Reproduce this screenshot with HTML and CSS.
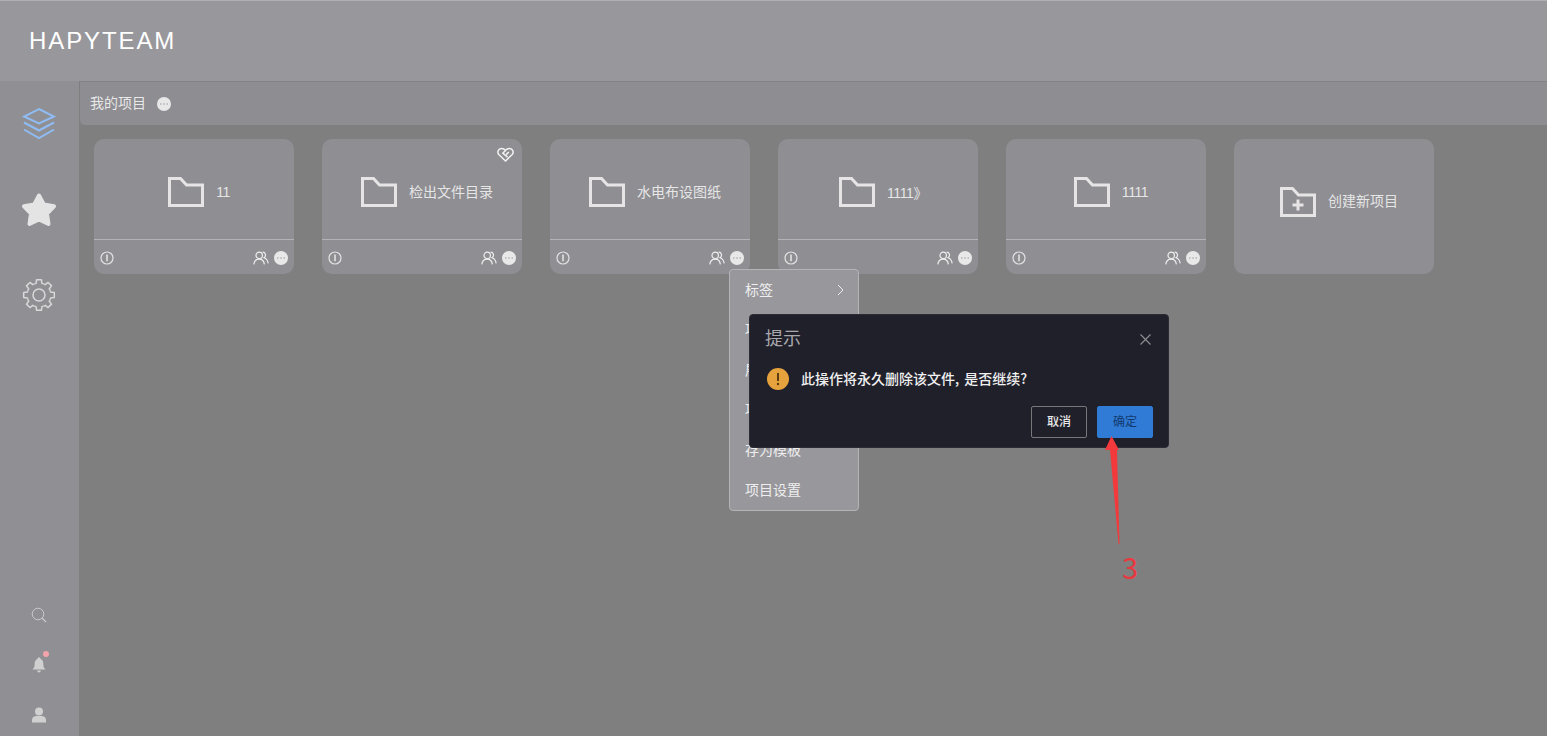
FILE: index.html
```html
<!DOCTYPE html>
<html lang="zh-CN">
<head>
<meta charset="utf-8">
<title>HAPYTEAM</title>
<link rel="stylesheet" href="styles.css">
</head>
<body>
<svg class="defs" width="0" height="0" aria-hidden="true">
  <symbol id="folder" viewBox="0 0 36 30"><path d="M1.5 1.5H12.5L18.5 8H34.5V28.5H1.5Z" fill="none" stroke="currentColor" stroke-width="3"/></symbol>
  <symbol id="info" viewBox="0 0 14 14"><circle cx="7" cy="7" r="6" fill="none" stroke="currentColor" stroke-width="1.2"/><path d="M7 3.6V10.2" stroke="currentColor" stroke-width="1.6"/></symbol>
  <symbol id="people" viewBox="0 0 16 14"><circle cx="6.2" cy="4.4" r="3.2" fill="none" stroke="currentColor" stroke-width="1.2"/><path d="M.8 13.4C1.2 10 3.2 8.2 6.2 8.2S11 10 11.4 13.4M9.6 1.2C12.4 1 13.6 4.8 11 6.8C13.4 7.6 14.8 9.6 15.2 12.4" fill="none" stroke="currentColor" stroke-width="1.2"/></symbol>
  <symbol id="more" viewBox="0 0 14 14"><circle cx="7" cy="7" r="7" fill="currentColor"/><circle cx="3.8" cy="7" r=".7" fill="#9a999e"/><circle cx="7" cy="7" r=".7" fill="#9a999e"/><circle cx="10.2" cy="7" r=".7" fill="#9a999e"/></symbol>
  <path id="gear-seg" d="M-4.59 -11.09A12 12 0 0 1 -2.9 -11.64L-2.42 -15.31H2.42L2.9 -11.64A12 12 0 0 1 4.59 -11.09"/>
</svg>

<header class="topbar"><span class="brand">HAPYTEAM</span></header>

<div class="shell">
  <nav class="sidebar">
    <div class="nav-main">
      <svg class="nav-layers" width="34" height="34" viewBox="0 0 34 34"><path d="M17 2L32 9.500L17 16.500L2 9.500Z M2 15.500L17 23.500L32 15.500 M2 22.500L17 31L32 22.500" fill="none" stroke="currentColor" stroke-width="2"/></svg>
      <svg class="nav-star" width="36" height="36" viewBox="0 0 36 36"><path d="M18 3.500L22.800 12.400L33 14.300L26 21.600L27.500 32L18 27.500L8.500 32L10 21.600L3 14.300L13.200 12.400Z" fill="currentColor" stroke="currentColor" stroke-width="4" stroke-linejoin="round"/></svg>
      <svg class="nav-gear" width="34" height="34" viewBox="0 0 34 34">
        <g transform="translate(17 17)" fill="none" stroke="currentColor" stroke-width="1.500" stroke-linejoin="round">
          <use href="#gear-seg"/>
          <use href="#gear-seg" transform="rotate(45)"/>
          <use href="#gear-seg" transform="rotate(90)"/>
          <use href="#gear-seg" transform="rotate(135)"/>
          <use href="#gear-seg" transform="rotate(180)"/>
          <use href="#gear-seg" transform="rotate(225)"/>
          <use href="#gear-seg" transform="rotate(270)"/>
          <use href="#gear-seg" transform="rotate(315)"/>
          <circle r="6"/>
        </g>
      </svg>
    </div>
    <div class="nav-tools">
      <svg class="tool-search" width="16" height="16" viewBox="0 0 16 16"><circle cx="7" cy="7" r="5.800" fill="none" stroke="currentColor" stroke-width="1"/><path d="M11 11L15 15" stroke="currentColor" stroke-width="1.200"/></svg>
      <span class="bell-wrap">
        <svg class="tool-bell" width="14" height="16" viewBox="0 0 14 16"><path d="M7 .5C8 .5 8.600 1.200 8.600 2C11 3 11.400 5.200 11.400 8C11.400 10 12 11 13.600 12.600H.4C2 11 2.600 10 2.600 8C2.600 5.200 3 3 5.400 2C5.400 1.200 6 .5 7 .5ZM5.200 13.600H8.800C8.800 14.800 8 15.500 7 15.500S5.200 14.800 5.200 13.600Z" fill="currentColor"/></svg>
        <span class="bell-dot"></span>
      </span>
      <svg class="tool-user" width="16" height="16" viewBox="0 0 16 16"><circle cx="8" cy="4.400" r="4" fill="currentColor"/><path d="M1 15.500V13C1 10.400 3 9 5.400 9H10.600C13 9 15 10.400 15 13V15.500Z" fill="currentColor"/></svg>
    </div>
  </nav>

  <main class="content">
    <div class="crumb">
      <span class="crumb-text">我的项目</span>
      <svg class="crumb-more" width="14" height="14"><use href="#more"/></svg>
    </div>
    <div class="grid">
      <article class="card">
        <div class="card-body"><svg class="folder" width="36" height="30"><use href="#folder"/></svg><span class="name num">11</span></div>
        <div class="card-foot"><svg class="ic-info" width="14" height="14"><use href="#info"/></svg><svg class="ic-people" width="16" height="14"><use href="#people"/></svg><svg class="ic-more" width="14" height="14"><use href="#more"/></svg></div>
      </article>
      <article class="card">
        <svg class="heart" width="17" height="15" viewBox="0 0 17 15"><path d="M8.500 14L1.800 7.500C0 5.400 1 1.600 4.400 1.400C6 1.300 7.400 2 8.500 3.400C9.600 2 11 1.300 12.600 1.400C16 1.600 17 5.400 15.200 7.500Z" fill="none" stroke="currentColor" stroke-width="1.500"/><path d="M8.500 3.400L5.800 6.200L10.600 10.200M11.800 5L9.200 7.600" fill="none" stroke="currentColor" stroke-width="1.500"/></svg>
        <div class="card-body"><svg class="folder" width="36" height="30"><use href="#folder"/></svg><span class="name">检出文件目录</span></div>
        <div class="card-foot"><svg class="ic-info" width="14" height="14"><use href="#info"/></svg><svg class="ic-people" width="16" height="14"><use href="#people"/></svg><svg class="ic-more" width="14" height="14"><use href="#more"/></svg></div>
      </article>
      <article class="card">
        <div class="card-body"><svg class="folder" width="36" height="30"><use href="#folder"/></svg><span class="name">水电布设图纸</span></div>
        <div class="card-foot"><svg class="ic-info" width="14" height="14"><use href="#info"/></svg><svg class="ic-people" width="16" height="14"><use href="#people"/></svg><svg class="ic-more" width="14" height="14"><use href="#more"/></svg></div>
      </article>
      <article class="card">
        <div class="card-body"><svg class="folder" width="36" height="30"><use href="#folder"/></svg><span class="name num">1111》</span></div>
        <div class="card-foot"><svg class="ic-info" width="14" height="14"><use href="#info"/></svg><svg class="ic-people" width="16" height="14"><use href="#people"/></svg><svg class="ic-more" width="14" height="14"><use href="#more"/></svg></div>
      </article>
      <article class="card">
        <div class="card-body"><svg class="folder" width="36" height="30"><use href="#folder"/></svg><span class="name num">1111</span></div>
        <div class="card-foot"><svg class="ic-info" width="14" height="14"><use href="#info"/></svg><svg class="ic-people" width="16" height="14"><use href="#people"/></svg><svg class="ic-more" width="14" height="14"><use href="#more"/></svg></div>
      </article>
      <article class="card card-new">
        <svg class="folder" width="36" height="30" viewBox="0 0 36 30"><path d="M1.500 1.500H12.500L18.500 8H34.500V28.500H1.500Z" fill="none" stroke="currentColor" stroke-width="3"/><path d="M18 12.500V23.500M12.500 18H23.500" stroke="currentColor" stroke-width="3"/></svg>
        <span>创建新项目</span>
      </article>
    </div>
  </main>
</div>

<ul class="menu">
  <li><span>标签</span><svg width="7" height="12" viewBox="0 0 7 12"><path d="M1 1L6 6L1 11" fill="none" stroke="currentColor" stroke-width="1"/></svg></li>
  <li><span>项目重命名</span></li>
  <li><span>展示成员</span></li>
  <li><span>项目归档</span></li>
  <li><span>存为模板</span></li>
  <li><span>项目设置</span></li>
</ul>

<section class="dialog">
  <div class="dialog-head">
    <h2>提示</h2>
    <svg class="dialog-close" width="11" height="11" viewBox="0 0 11 11"><path d="M.5 .5L10.500 10.500M10.500 .5L.5 10.500" stroke="currentColor" stroke-width="1.100"/></svg>
  </div>
  <div class="dialog-msg">
    <svg width="22" height="22" viewBox="0 0 22 22"><circle cx="11" cy="11" r="11" fill="#e6a23c"/><path d="M11 5V13" stroke="#5b3d10" stroke-width="2"/><circle cx="11" cy="16" r="1.200" fill="#5b3d10"/></svg>
    <p>此操作将永久删除该文件, 是否继续?</p>
  </div>
  <div class="dialog-foot">
    <button class="btn">取消</button>
    <button class="btn btn-primary">确定</button>
  </div>
</section>

<svg class="arrow" width="24" height="112" viewBox="0 0 24 112"><path d="M7.500 1L15 15L13 15L15.500 109L14.500 109L6 15L1 15Z" fill="#f23a3c"/></svg>
<span class="step">3</span>
</body>
</html>
```

FILE: styles.css
```css
* { box-sizing: border-box; }
html, body { margin: 0; height: 100%; }
body {
  width: 1547px;
  height: 736px;
  overflow: hidden;
  position: relative;
  display: flex;
  flex-direction: column;
  background: #7f7f7f;
  color: #e6e6e6;
  font-family: "Noto Sans CJK SC", "Liberation Sans", sans-serif;
  font-size: 14px;
}
.defs { position: absolute; }

.topbar {
  height: 81px;
  flex: none;
  display: flex;
  align-items: center;
  padding-left: 29px;
  background: #98979c;
  border-top: 1px solid #b0afb3;
}
.brand {
  font-family: "Liberation Sans", sans-serif;
  font-size: 24px;
  letter-spacing: 1.9px;
  color: #fff;
}

.shell { flex: 1; display: flex; min-height: 0; }

.sidebar {
  width: 79px;
  flex: none;
  background: #908f94;
  display: flex;
  flex-direction: column;
  justify-content: space-between;
  align-items: center;
  padding: 26px 1px 13px 0;
}
.nav-main { display: flex; flex-direction: column; align-items: center; gap: 51px; }
.nav-layers { color: #8fbcf2; }
.nav-star { color: #e4e4e4; }
.nav-gear { color: #d8d8d8; margin-top: -1px; }
.nav-tools { display: flex; flex-direction: column; align-items: center; gap: 34px; color: #d0d0d0; }
.tool-search { color: #c8c8c8; }
.bell-wrap { position: relative; display: block; width: 14px; height: 16px; }
.tool-bell, .tool-user, .tool-search { display: block; }
.bell-dot {
  position: absolute;
  top: -6px;
  right: -3px;
  width: 6px;
  height: 6px;
  border-radius: 50%;
  background: #f4a3ab;
}

.content { flex: 1; min-width: 0; padding-left: 1px; }
.crumb {
  height: 44px;
  display: flex;
  align-items: center;
  gap: 11px;
  padding-left: 10px;
  background: #8e8d92;
  border-top: 1px solid #828186;
  border-bottom-left-radius: 5px;
  font-size: 14px;
  color: #e8e8e8;
}
.crumb-text { margin-bottom: 4px; }
.crumb-more { color: #e8e8e8; }

.grid { display: flex; gap: 28px; padding: 14px; }
.card {
  position: relative;
  width: 200px;
  height: 135px;
  flex: none;
  display: flex;
  flex-direction: column;
  background: #8f8e93;
  border-radius: 10px;
  overflow: hidden;
}
.card-body {
  height: 101px;
  flex: none;
  display: flex;
  align-items: center;
  justify-content: center;
  gap: 12px;
  padding: 6px 0 0 10px;
  border-bottom: 1px solid #b3b2b6;
}
.name { margin-bottom: 2px; }
.num {
  margin-bottom: 0;
  font-family: "Liberation Sans", "Noto Sans CJK SC", sans-serif;
  letter-spacing: -.4px;
}
.folder { color: #e6e4e4; flex: none; }
.card-foot {
  flex: 1;
  display: flex;
  align-items: center;
  padding: 2px 6px 0;
}
.ic-info { color: #e2e2e2; }
.ic-people { color: #eeeeee; margin-left: auto; margin-right: 5px; }
.ic-more { color: #e8e8e8; }
.heart { position: absolute; top: 8px; right: 8px; color: #f2f2f2; }
.card-new {
  flex-direction: row;
  align-items: center;
  justify-content: center;
  gap: 12px;
  padding: 0 0 0 10px;
}
.card-new .folder { margin-top: -9px; }
.card-new span { margin-top: -14px; }

.menu {
  position: absolute;
  left: 729px;
  top: 269px;
  width: 130px;
  height: 242px;
  margin: 0;
  padding: 0 14px 0 15px;
  list-style: none;
  background: #98979c;
  border: 1px solid #b4b3b7;
  border-radius: 4px;
  color: #eeeeee;
}
.menu li {
  height: 40px;
  display: flex;
  align-items: center;
  justify-content: space-between;
}
.menu span { margin-bottom: 2px; }

.dialog {
  position: absolute;
  left: 749px;
  top: 314px;
  width: 420px;
  height: 134px;
  padding: 0 15px;
  background: #20202b;
  border: 1px solid #2c2c36;
  border-radius: 4px;
  display: flex;
  flex-direction: column;
}
.dialog-head {
  display: flex;
  align-items: center;
  justify-content: space-between;
  height: 47px;
  color: #8f8f94;
  padding-right: 2px;
}
.dialog-head h2 {
  margin: 0 0 4px;
  font-size: 18px;
  font-weight: 400;
  color: #a8a8ac;
}
.dialog-close { margin-top: 2px; }
.dialog-msg {
  display: flex;
  align-items: center;
  gap: 12px;
  height: 34px;
  padding-left: 2px;
}
.dialog-msg p {
  margin: 0 0 2px;
  font-size: 14px;
  font-weight: 500;
  color: #f0f0f0;
  word-spacing: 2px;
}
.dialog-foot {
  display: flex;
  justify-content: flex-end;
  gap: 10px;
  margin-top: 10px;
}
.btn {
  width: 56px;
  height: 32px;
  padding: 0 0 3px;
  font: 500 12px "Noto Sans CJK SC", sans-serif;
  color: #e8e8e8;
  background: transparent;
  border: 1px solid #77777c;
  border-radius: 2px;
}
.btn-primary {
  background: #2f7bd6;
  border-color: #2f7bd6;
  color: #123a6e;
  font-weight: 400;
}

.arrow { position: absolute; left: 1104px; top: 435px; }
.step {
  position: absolute;
  left: 1122px;
  top: 546px;
  font-family: "Noto Sans CJK SC", sans-serif;
  font-size: 29px;
  font-weight: 400;
  line-height: 40px;
  color: #e8393f;
}
```
